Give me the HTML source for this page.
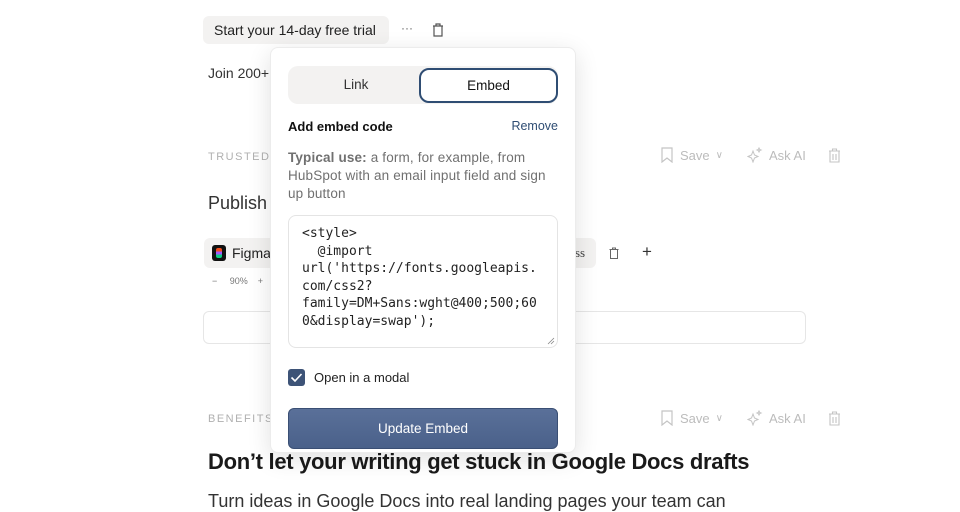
<!DOCTYPE html>
<html><head><meta charset="utf-8"><style>
*{box-sizing:border-box;margin:0;padding:0}
body{width:960px;height:504px;overflow:hidden;background:#fff;font-family:"Liberation Sans",sans-serif;color:#1f1f1f;position:relative}
.a{position:absolute;white-space:nowrap}
.lab{font-size:11px;letter-spacing:1.5px;color:#b0b0b0}
.tool{font-size:13px;color:#bcbcbc}
svg{display:block}
</style></head><body>
<div class="a" style="left:203px;top:16px;width:186px;height:28px;background:#f3f2f1;border-radius:6px;font-size:14px;line-height:28px;padding-left:11px;color:#222">Start your 14-day free trial</div>
<div class="a" style="left:401px;top:21px;font-size:12px;color:#666">···</div>
<svg class="a" style="left:432px;top:23px" width="12" height="14" viewBox="0 0 12 14"><path d="M2 3h8v10H2zM4 3V1h4v2M1 3h10" fill="none" stroke="#555" stroke-width="1.2"/></svg>
<div class="a" style="left:208px;top:65px;font-size:14px;color:#333">Join 200+</div>
<div class="a lab" style="left:208px;top:151px">TRUSTED</div>
<div class="a" style="left:208px;top:193px;font-size:18px;color:#333">Publish</div>
<div class="a" style="left:204px;top:238px;width:80px;height:30px;background:#f3f2f1;border-radius:6px"></div>
<div class="a" style="left:212px;top:245px;width:14px;height:16px;background:#111;border-radius:3px"><div style="margin:3px 4px;width:6px;height:10px;background:linear-gradient(#f24e1e 33%,#a259ff 33% 66%,#0acf83 66%);border-radius:2px"></div></div>
<div class="a" style="left:232px;top:245px;font-size:14px;color:#222">Figma</div>
<div class="a" style="left:212px;top:276px;font-size:9px;color:#777">−&nbsp;&nbsp;&nbsp;&nbsp; 90% &nbsp;&nbsp;&nbsp;+</div>
<div class="a" style="left:540px;top:238px;width:56px;height:30px;background:#f3f2f1;border-radius:6px"></div>
<div class="a" style="left:575px;top:245px;font-size:13px;color:#444;font-family:'Liberation Serif',serif">ss</div>
<svg class="a" style="left:609px;top:247px" width="10" height="12" viewBox="0 0 10 12"><path d="M1.5 2.5h7v9h-7zM3.5 2.5V1h3v1.5M0.5 2.5h9" fill="none" stroke="#666" stroke-width="1"/></svg>
<div class="a" style="left:642px;top:242px;font-size:17px;color:#333">+</div>
<div class="a" style="left:203px;top:311px;width:603px;height:33px;border:1px solid #e6e6e6;border-radius:6px"></div>
<div class="a lab" style="left:208px;top:413px">BENEFITS</div>
<div class="a" style="left:660px;top:147px;display:flex;align-items:center;gap:6px">
<svg width="14" height="16" viewBox="0 0 14 16"><path d="M2 1h10v14l-5-4-5 4z" fill="none" stroke="#c4c4c4" stroke-width="1.2"/></svg><span class="tool">Save</span><span class="tool" style="font-size:10px">∨</span>
<svg style="margin-left:18px" width="16" height="16" viewBox="0 0 16 16"><path d="M6 4l1.5 4L11 9.5 7.5 11 6 15 4.5 11 1 9.5 4.5 8z M12 1l.7 1.5L14 3l-1.3.5L12 5l-.7-1.5L10 3l1.3-.5z" fill="none" stroke="#c4c4c4" stroke-width="1"/></svg><span class="tool">Ask AI</span>
<svg style="margin-left:16px" width="13" height="15" viewBox="0 0 13 15"><path d="M2 3h9v11H2zM4.5 3V1h4v2M1 3h11M5 6v6M8 6v6" fill="none" stroke="#c4c4c4" stroke-width="1.1"/></svg></div>
<div class="a" style="left:660px;top:410px;display:flex;align-items:center;gap:6px">
<svg width="14" height="16" viewBox="0 0 14 16"><path d="M2 1h10v14l-5-4-5 4z" fill="none" stroke="#c4c4c4" stroke-width="1.2"/></svg><span class="tool">Save</span><span class="tool" style="font-size:10px">∨</span>
<svg style="margin-left:18px" width="16" height="16" viewBox="0 0 16 16"><path d="M6 4l1.5 4L11 9.5 7.5 11 6 15 4.5 11 1 9.5 4.5 8z M12 1l.7 1.5L14 3l-1.3.5L12 5l-.7-1.5L10 3l1.3-.5z" fill="none" stroke="#c4c4c4" stroke-width="1"/></svg><span class="tool">Ask AI</span>
<svg style="margin-left:16px" width="13" height="15" viewBox="0 0 13 15"><path d="M2 3h9v11H2zM4.5 3V1h4v2M1 3h11M5 6v6M8 6v6" fill="none" stroke="#c4c4c4" stroke-width="1.1"/></svg></div>
<div class="a" style="left:208px;top:449px;font-size:22px;font-weight:bold;color:#1a1a1a;letter-spacing:-0.3px">Don’t let your writing get stuck in Google Docs drafts</div>
<div class="a" style="left:208px;top:491px;font-size:18px;color:#333">Turn ideas in Google Docs into real landing pages your team can</div>
<div class="a" style="left:270px;top:47px;width:306px;height:406px;background:#fff;border:1px solid #ececec;border-radius:8px;box-shadow:0 6px 24px rgba(0,0,0,.12)">
<div class="a" style="left:17px;top:18px;width:270px;height:38px;background:#f3f2f1;border-radius:10px"></div>
<div class="a" style="left:17px;top:29px;width:136px;text-align:center;font-size:13.5px;color:#333">Link</div>
<div class="a" style="left:148px;top:20px;width:139px;height:35px;background:#fff;border:2px solid #2f4d73;border-radius:10px;text-align:center;line-height:31px;font-size:13.5px;color:#111">Embed</div>
<div class="a" style="left:17px;top:71px;font-size:13px;font-weight:bold;color:#111">Add embed code</div>
<div class="a" style="right:17px;top:71px;font-size:12.5px;color:#2f4d73">Remove</div>
<div class="a" style="left:17px;top:101px;width:272px;white-space:normal;font-size:13.5px;letter-spacing:0.15px;line-height:18px;color:#707070"><b>Typical use:</b> a form, for example, from HubSpot with an email input field and sign up button</div>
<div class="a" style="left:17px;top:167px;width:270px;height:133px;border:1px solid #e4e4e4;border-radius:8px;padding:9px 0 0 13px;font-family:'DejaVu Sans Mono','Liberation Mono',monospace;font-size:13px;line-height:17.5px;color:#222;white-space:pre">&lt;style&gt;
  @import
url('https://fonts.googleapis.
com/css2?
family=DM+Sans:wght@400;500;60
0&amp;display=swap');</div>
<svg class="a" style="left:276px;top:289px" width="8" height="8" viewBox="0 0 8 8"><path d="M1 7L7 1M4 7L7 4" stroke="#888" stroke-width="0.8"/></svg>
<div class="a" style="left:17px;top:321px;width:17px;height:17px;background:#3d5377;border-radius:3px"><svg width="17" height="17" viewBox="0 0 17 17"><path d="M3.5 8.5l3.5 3.5 6.5-7" fill="none" stroke="#fff" stroke-width="1.6"/></svg></div>
<div class="a" style="left:43px;top:322px;font-size:13px;color:#222">Open in a modal</div>
<div class="a" style="left:17px;top:360px;width:270px;height:41px;background:linear-gradient(#5a7099,#4a618a);border:1px solid #3a4f74;border-radius:6px;text-align:center;line-height:39px;color:#fff;font-size:13.5px">Update Embed</div>
</div>
</body></html>
